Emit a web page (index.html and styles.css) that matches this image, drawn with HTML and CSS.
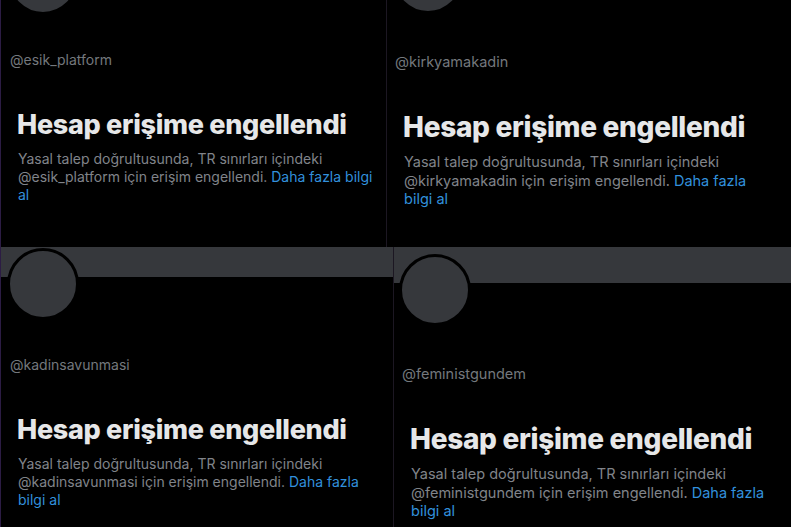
FILE: index.html
```html
<!DOCTYPE html>
<html lang="tr">
<head>
<meta charset="utf-8">
<link rel="stylesheet" href="styles.css">
</head>
<body>
<div class="page">
  <div class="row row-top">
    <section class="panel panel-tl">
      <div class="card crop-tl">
        <div class="banner"></div>
        <div class="avatar"></div>
        <div class="handle">@esik_platform</div>
        <h2 class="title">Hesap erişime engellendi</h2>
        <p class="body">Yasal talep doğrultusunda, TR sınırları içindeki @esik_platform için erişim engellendi. <a class="link">Daha fazla bilgi al</a></p>
      </div>
    </section>
    <div class="divider"></div>
    <section class="panel panel-tr">
      <div class="card large crop-tr">
        <div class="banner"></div>
        <div class="avatar"></div>
        <div class="handle">@kirkyamakadin</div>
        <h2 class="title">Hesap erişime engellendi</h2>
        <p class="body">Yasal talep doğrultusunda, TR sınırları içindeki @kirkyamakadin için erişim engellendi. <a class="link">Daha fazla bilgi al</a></p>
      </div>
    </section>
  </div>
  <div class="row row-bottom">
    <section class="panel panel-bl">
      <div class="card">
        <div class="banner"></div>
        <div class="avatar"></div>
        <div class="handle">@kadinsavunmasi</div>
        <h2 class="title">Hesap erişime engellendi</h2>
        <p class="body">Yasal talep doğrultusunda, TR sınırları içindeki @kadinsavunmasi için erişim engellendi. <a class="link">Daha fazla bilgi al</a></p>
      </div>
    </section>
    <div class="divider"></div>
    <section class="panel panel-br">
      <div class="card large">
        <div class="banner"></div>
        <div class="avatar"></div>
        <div class="handle">@feministgundem</div>
        <h2 class="title">Hesap erişime engellendi</h2>
        <p class="body">Yasal talep doğrultusunda, TR sınırları içindeki @feministgundem için erişim engellendi. <a class="link">Daha fazla bilgi al</a></p>
      </div>
    </section>
  </div>
</div>
</body>
</html>
```
FILE: styles.css
```css
* { box-sizing: border-box; }
html, body {
  margin: 0;
  padding: 0;
  background: #000;
}
body {
  width: 791px;
  height: 527px;
  overflow: hidden;
  font-family: Inter, "Noto Sans", "Liberation Sans", sans-serif;
}
.page {
  display: flex;
  flex-direction: column;
  width: 791px;
  height: 527px;
  border-left: 1px solid #2c1c44;
  background: #000;
}
.row {
  display: flex;
  overflow: hidden;
}
.row-top { height: 247px; }
.row-bottom { height: 280px; }
.divider {
  width: 1px;
  flex: none;
  background: #1c1722;
}
.panel {
  overflow: hidden;
  background: #000;
}
.panel-tl { width: 385px; flex: none; }
.panel-tr { flex: 1; }
.panel-bl { width: 392px; flex: none; }
.panel-br { flex: 1; }

.crop-tl { margin-top: -58px; }
.crop-tr { margin-top: -65px; }

.card {
  display: flex;
  flex-direction: column;
}
.banner {
  height: 30px;
  background: #36383c;
}
.avatar {
  width: 72px;
  height: 72px;
  border-radius: 50%;
  background: #36383c;
  border: 3px solid #000;
  margin: -29px 0 0 6px;
}
.handle {
  margin: 35px 0 0 9px;
  font-size: 14px;
  line-height: 20px;
  color: #74787d;
}
.title {
  margin: 38px 0 0 16px;
  font-size: 27px;
  line-height: 33px;
  font-weight: 800;
  color: #e6e7e8;
  letter-spacing: -0.3px;
}
.body {
  margin: 9px 10px 0 17px;
  font-size: 14px;
  line-height: 18px;
  color: #80848a;
}
.link {
  color: #3290dc;
}

.large .banner { height: 36px; }
.large .avatar {
  margin: -29px 0 0 5px;
}
.large .handle {
  margin: 38px 0 0 8px;
  font-size: 14.5px;
}
.large .title {
  margin: 38px 0 0 16px;
  font-size: 28px;
  line-height: 35px;
}
.large .body {
  margin: 8px 20px 0 17px;
  font-size: 14.5px;
  line-height: 18.5px;
}
```
